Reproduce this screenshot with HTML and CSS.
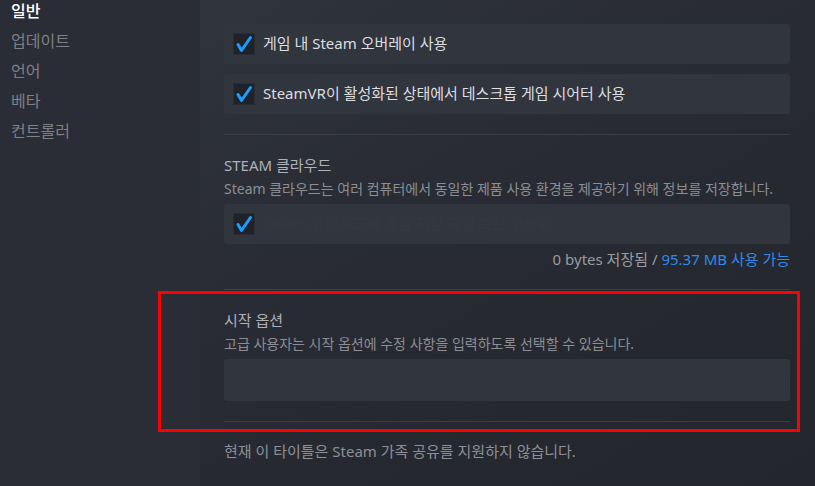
FILE: index.html
```html
<!DOCTYPE html>
<html lang="ko">
<head>
<meta charset="utf-8">
<title>속성 - 일반</title>
<link rel="stylesheet" href="styles.css">
</head>
<body>
<div class="app">
  <nav class="sidebar">
    <ul class="nav">
      <li class="nav-item active">일반</li>
      <li class="nav-item">업데이트</li>
      <li class="nav-item">언어</li>
      <li class="nav-item">베타</li>
      <li class="nav-item">컨트롤러</li>
    </ul>
  </nav>
  <main class="main">
    <div class="rows">
      <label class="row">
        <span class="checkbox"><svg viewBox="0 0 22 22" width="22" height="22"><polyline points="5,11.5 8.5,17.5 17.5,4.5" fill="none" stroke="#1a9fff" stroke-width="3" stroke-linecap="round" stroke-linejoin="round"/></svg></span>
        <span class="row-label">게임 내 Steam 오버레이 사용</span>
      </label>
      <label class="row">
        <span class="checkbox"><svg viewBox="0 0 22 22" width="22" height="22"><polyline points="5,11.5 8.5,17.5 17.5,4.5" fill="none" stroke="#1a9fff" stroke-width="3" stroke-linecap="round" stroke-linejoin="round"/></svg></span>
        <span class="row-label">SteamVR이 활성화된 상태에서 데스크톱 게임 시어터 사용</span>
      </label>
    </div>

    <hr class="sep sep-first">

    <section class="section">
      <h2 class="section-title">STEAM 클라우드</h2>
      <p class="section-desc">Steam 클라우드는 여러 컴퓨터에서 동일한 제품 사용 환경을 제공하기 위해 정보를 저장합니다.</p>
      <label class="row row-cloud">
        <span class="checkbox"><svg viewBox="0 0 22 22" width="22" height="22"><polyline points="5,11.5 8.5,17.5 17.5,4.5" fill="none" stroke="#1a9fff" stroke-width="3" stroke-linecap="round" stroke-linejoin="round"/></svg></span>
        <span class="row-label faint">Steam 클라우드에 게임 저장 파일 보관 Store:</span>
      </label>
      <p class="storage">0 bytes 저장됨 / <span class="avail">95.37 MB 사용 가능</span></p>
    </section>

    <hr class="sep sep-second">

    <section class="section">
      <h2 class="section-title">시작 옵션</h2>
      <p class="section-desc">고급 사용자는 시작 옵션에 수정 사항을 입력하도록 선택할 수 있습니다.</p>
      <div class="input-box"></div>
    </section>

    <hr class="sep sep-third">

    <p class="footnote">현재 이 타이틀은 Steam 가족 공유를 지원하지 않습니다.</p>
  </main>
  <div class="highlight"></div>
</div>
</body>
</html>
```

FILE: styles.css
```css
* {
  box-sizing: border-box;
}

html, body {
  margin: 0;
  padding: 0;
  width: 815px;
  height: 486px;
  overflow: hidden;
  background: #2a2d36;
  font-family: "Noto Sans", "Noto Sans CJK KR", sans-serif;
}

.app {
  position: relative;
  display: flex;
  width: 815px;
  height: 486px;
}

.sidebar {
  width: 200px;
  flex: 0 0 200px;
  background: #2a2d36;
}

.nav {
  list-style: none;
  margin: -4px 0 0 0;
  padding: 0 0 0 11px;
}

.nav-item {
  height: 30px;
  line-height: 30px;
  font-size: 16px;
  color: #7d8087;
}

.nav-item.active {
  color: #ffffff;
  font-weight: 500;
}

.main {
  flex: 1;
  padding: 24px 25px 0 24px;
  background: linear-gradient(150deg, #30343d 0%, #2a2d36 30%, #25282f 70%, #23262d 100%);
}

.rows {
  display: flex;
  flex-direction: column;
  gap: 10px;
}

.row {
  display: flex;
  align-items: center;
  gap: 8px;
  height: 40px;
  padding-left: 9px;
  background: #31353e;
  border-radius: 3px;
}

.checkbox {
  display: flex;
  width: 22px;
  height: 22px;
  background: #1f2228;
  border-radius: 2px;
  box-shadow: inset 0 0 0 1px #292c33;
}

.row-label {
  font-size: 15px;
  line-height: 20px;
  margin-top: -3px;
  color: #dcdee1;
  white-space: nowrap;
}

.row-label.faint {
  color: #343841;
}

.sep {
  margin: 0;
  border: 0;
  height: 1px;
  background: #393c44;
}

.sep-first {
  margin-top: 20px;
}

.sep-second {
  margin-top: 20px;
}

.sep-third {
  margin-top: 20px;
}

.section-title {
  margin: 20px 0 0 0;
  font-size: 15px;
  line-height: 20px;
  font-weight: 400;
  color: #aeb1b5;
}

.section-desc {
  margin: 5px 0 0 0;
  font-size: 14px;
  line-height: 18px;
  color: #8b8e94;
  white-space: nowrap;
}

.row-cloud {
  margin-top: 6px;
}

.storage {
  margin: 5px 0 0 0;
  font-size: 15px;
  line-height: 20px;
  text-align: right;
  color: #989ba0;
}

.avail {
  color: #2f8ae8;
}

.input-box {
  margin-top: 6px;
  height: 42px;
  background: #31353e;
  border-radius: 3px;
}

.footnote {
  margin: 19px 0 0 0;
  font-size: 15px;
  line-height: 20px;
  color: #8d9096;
}

.highlight {
  position: absolute;
  left: 158px;
  top: 291px;
  width: 642px;
  height: 141px;
  border: 3px solid #ff0000;
  pointer-events: none;
}
```
